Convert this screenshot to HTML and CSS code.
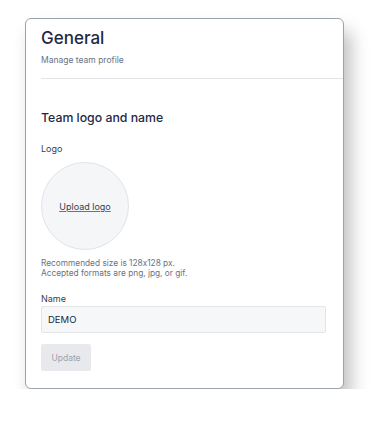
FILE: index.html
```html
<!DOCTYPE html>
<html>
<head>
<meta charset="utf-8">
<link rel="stylesheet" href="styles.css">
</head>
<body>
<div class="page">
  <div class="card">
    <header class="head">
      <h1 class="title">General</h1>
      <p class="sub">Manage team profile</p>
    </header>
    <section class="section">
      <h2 class="section-title">Team logo and name</h2>
      <div class="label">Logo</div>
      <div class="logo"><span class="upload">Upload logo</span></div>
      <p class="hint">Recommended size is 128x128 px.<br>Accepted formats are png, jpg, or gif.</p>
      <div class="label name-label">Name</div>
      <div class="input">DEMO</div>
      <button class="btn">Update</button>
    </section>
  </div>
</div>
</body>
</html>
```
FILE: styles.css
```css
html, body { margin: 0; padding: 0; background: #fff; }
body { font-family: Inter, "Noto Sans", sans-serif; color: #1f2937; font-feature-settings: "calt" 0; }
.page { padding: 18px 28px 0 25px; }
.card {
  width: 319px;
  height: 371px;
  box-sizing: border-box;
  border: 1.5px solid #9ba2ae;
  border-radius: 6px;
  background: #fff;
  box-shadow: 7px 13px 18px rgba(0,0,0,0.25);
  padding: 0 0 0 15px;
}
.head { border-bottom: 1px solid #e2e4e8; padding-top: 8px; padding-bottom: 12px; }
.title { margin: 0; font-size: 17px; font-weight: 500; color: #1f2a44; line-height: 22px; }
.sub { margin: 5px 0 0; font-size: 8.5px; color: #6b7280; line-height: 12px; }
.section { padding-top: 31px; padding-right: 17px; }
.section-title { margin: 0; font-size: 12.3px; font-weight: 500; color: #1f2a44; line-height: 16px; }
.label { font-size: 9px; color: #374151; margin-top: 17px; line-height: 12px; }
.logo {
  margin-top: 7px;
  width: 88px; height: 88px;
  box-sizing: border-box;
  border: 1px solid #e0e3e8;
  border-radius: 50%;
  background: #f5f6f8;
  display: flex; align-items: center; justify-content: center;
}
.upload { font-size: 9px; color: #374151; text-decoration: underline; text-decoration-color: #6b7280; }
.hint { margin: 8px 0 0; font-size: 8.3px; line-height: 10px; color: #6b7280; }
.name-label { margin-top: 15px; }
.input {
  margin-top: 1px;
  height: 27px;
  box-sizing: border-box;
  border: 1px solid #e3e5e9;
  border-radius: 2px;
  background: #f6f7f9;
  font-size: 9.5px;
  color: #1f2937;
  padding-left: 6px;
  display: flex; align-items: center;
}
.btn {
  margin-top: 11px;
  width: 50px; height: 27px;
  border: 0; border-radius: 2px;
  background: #e7e9ed;
  color: #9ca3af;
  font-family: inherit;
  font-size: 8.5px;
  padding: 0;
}
```
